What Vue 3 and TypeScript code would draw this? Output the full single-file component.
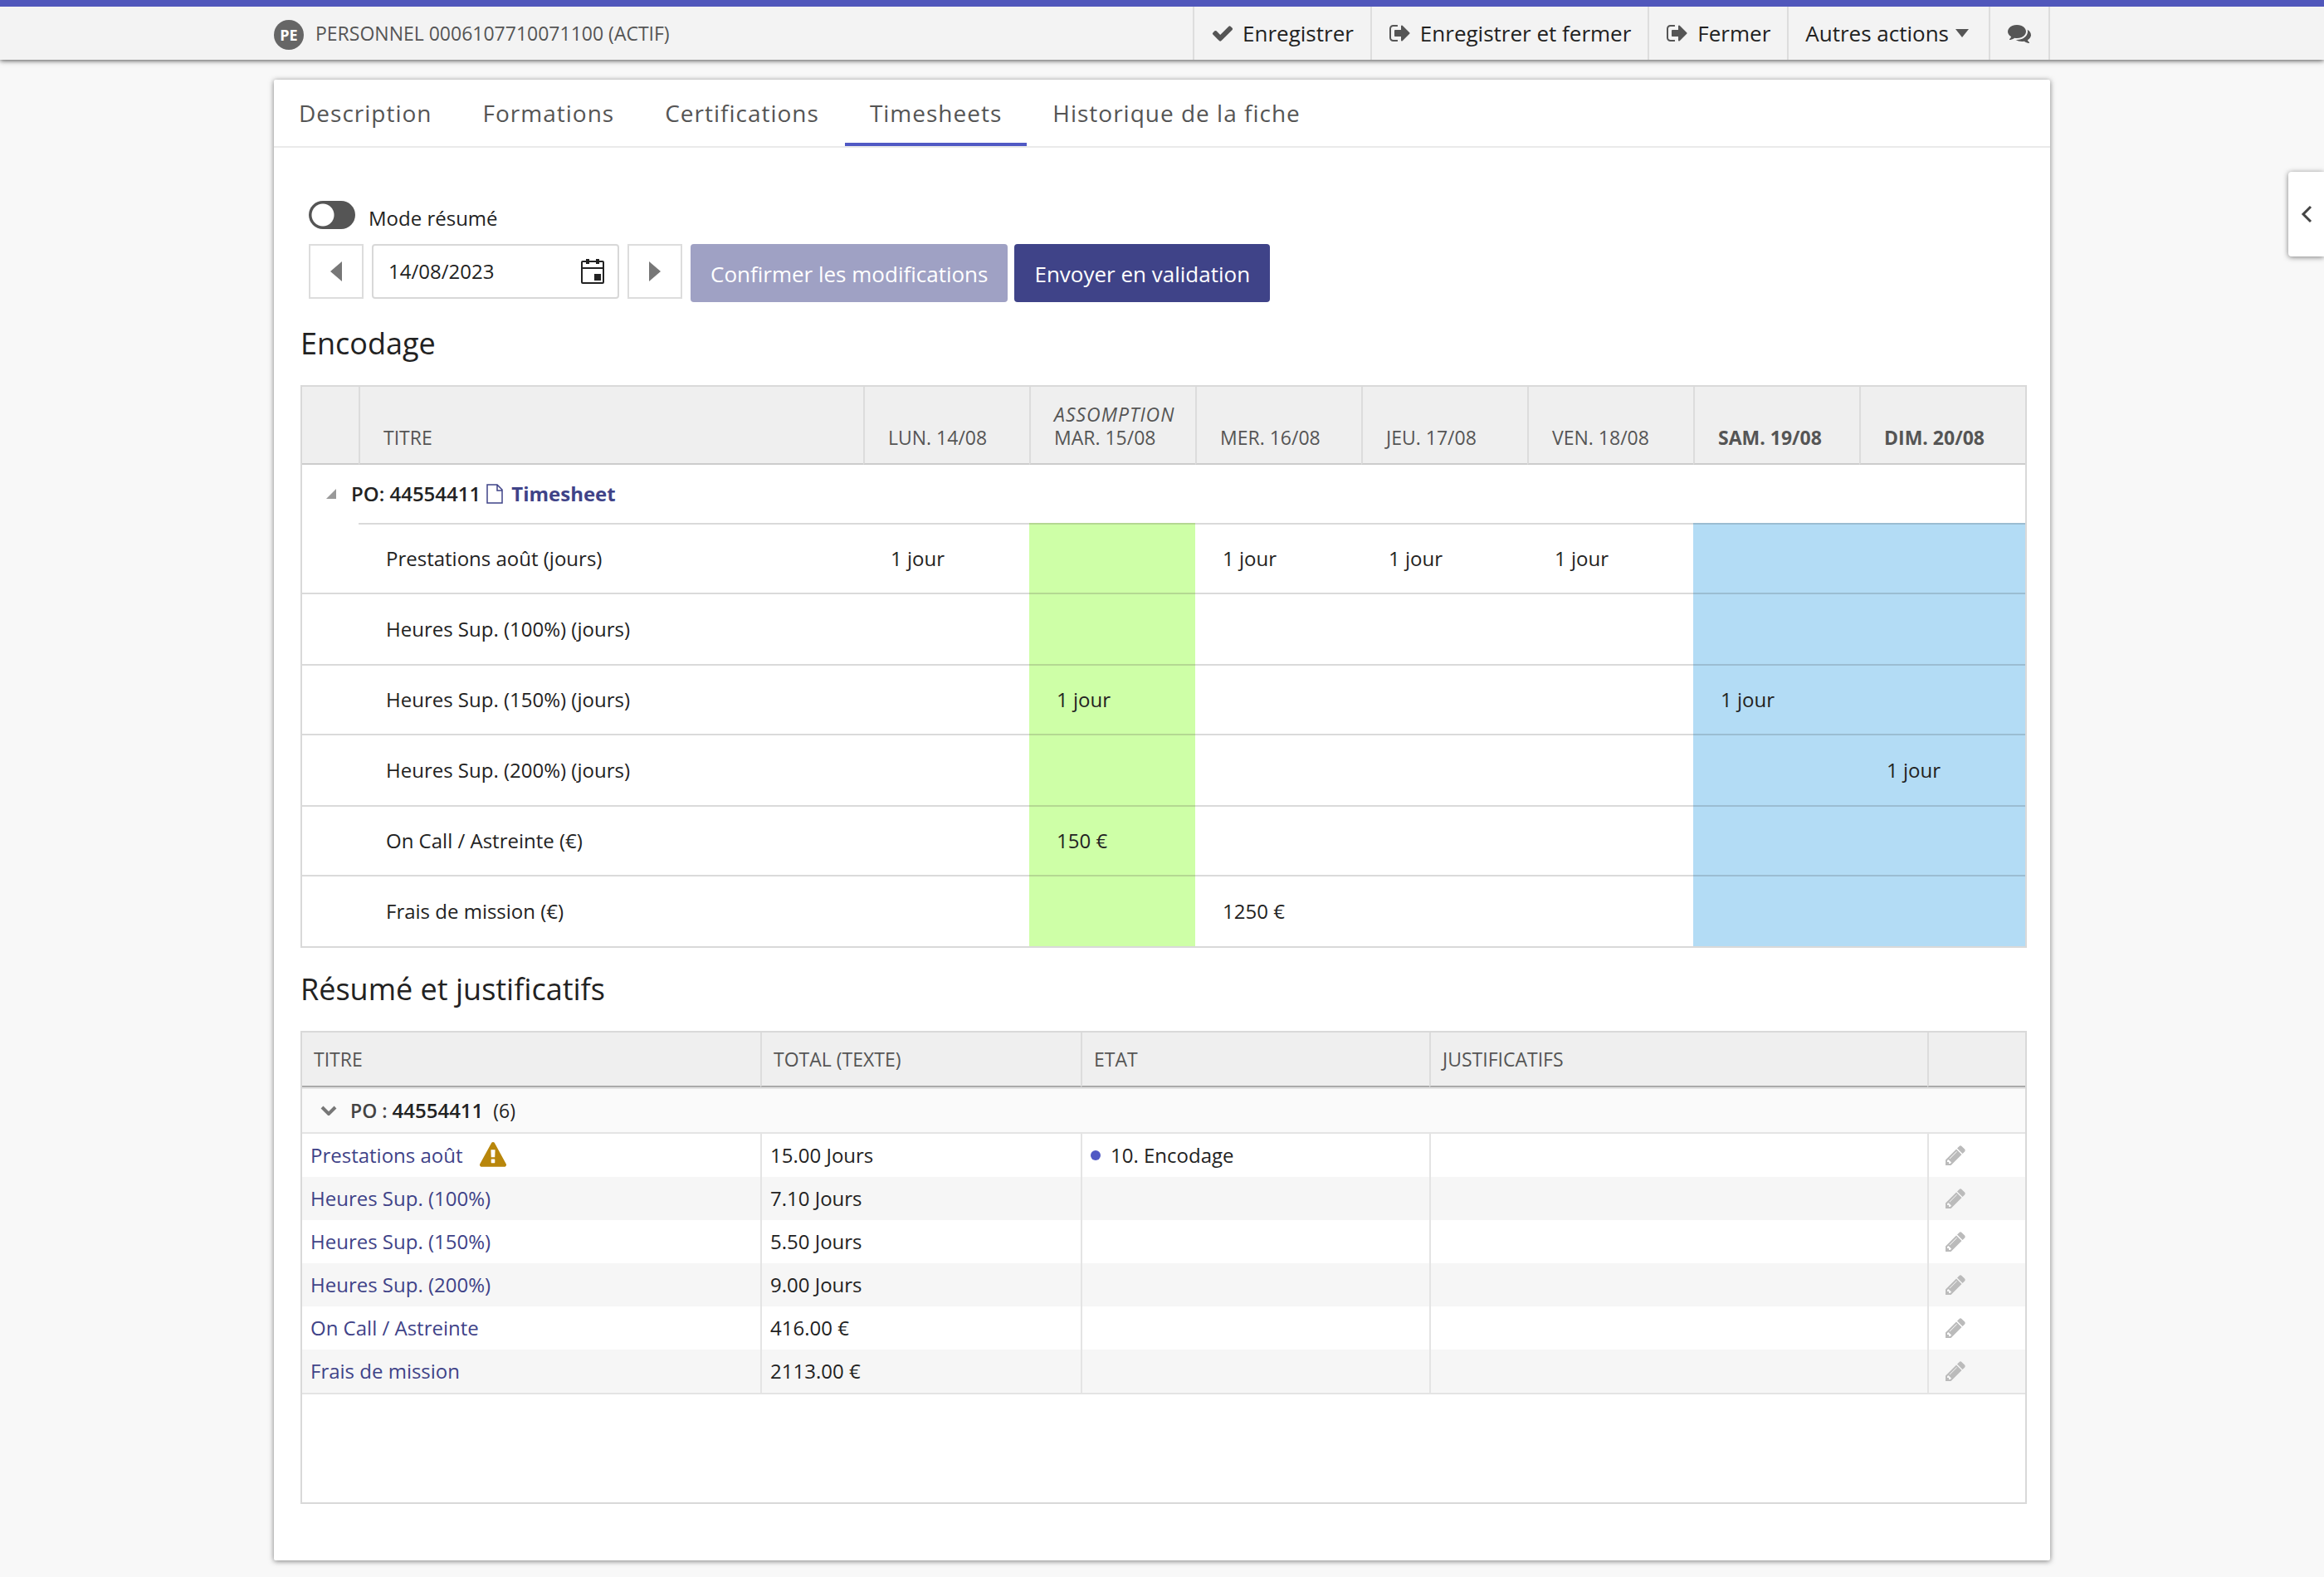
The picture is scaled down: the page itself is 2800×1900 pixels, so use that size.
<script setup lang="ts">
import { ref } from 'vue'

interface Action {
  label: string
  icon: string
}

interface Day {
  label: string
  note?: string
  kind?: 'holiday' | 'weekend'
}

interface Entry {
  title: string
  values: string[]
}

interface Summary {
  title: string
  total: string
  state?: string
  warning?: boolean
}

const icons = {
  check:
    'M1671 566q0 40-28 68l-724 724-136 136q-28 28-68 28t-68-28l-136-136-362-362q-28-28-28-68t28-68l136-136q28-28 68-28t68 28l294 295 656-657q28-28 68-28t68 28l136 136q28 28 28 68z',
  exit:
    'M704 1440q0 4 1 20t.5 26.5-3 23.5-10 19.5-20.5 6.5h-320q-119 0-203.500-84.500t-84.500-203.500v-704q0-119 84.500-203.500t203.500-84.500h320q13 0 22.500 9.500t9.500 22.500q0 4 1 20t.5 26.500-3 23.500-10 19.500-20.500 6.500h-320q-66 0-113 47t-47 113v704q0 66 47 113t113 47h312l11.500 1 11.500 3 8 5.500 7 9 2 13.500zm928-544q0 26-19 45l-544 544q-19 19-45 19t-45-19-19-45v-288h-448q-26 0-45-19t-19-45v-384q0-26 19-45t45-19h448v-288q0-26 19-45t45-19 45 19l544 544q19 19 19 45z',
  comments:
    'M1408 768q0 139-94 257t-256.500 186.500-353.500 68.500q-86 0-176-16-124 88-278 128-36 9-86 16h-3q-11 0-20.500-8t-11.500-21q-1-3-1-6.500t.5-6.500 2-6l2.500-5 3.500-5.500 4-5 4.500-5 4-4.500q5-6 23-25t26-29.500 22.500-29 25-38.500 20.500-44q-124-72-195-177t-71-224q0-139 94-257t256.500-186.500 353.500-68.500 353.500 68.500 256.500 186.500 94 257zm384 256q0 120-71 224.500t-195 176.500q10 24 20.500 44t25 38.500 22.500 29 26 29.500 23 25q1 1 4 4.500t4.500 5 4 5 3.500 5.500l2.500 5 2 6 .5 6.500-1 6.500q-3 14-13 22t-22 7q-50-7-86-16-154-40-278-128-90 16-176 16-271 0-472-132 58 4 88 4 161 0 309-45t264-129q125-92 192-212t67-254q0-77-23-152 129 71 204 187t75 264z',
  pencil:
    'M491 1536l91-91-235-235-91 91v107h128v128h107zm523-928q0-22-22-22-10 0-17 7l-542 542q-7 7-7 17 0 22 22 22 10 0 17-7l542-542q7-7 7-17zm-54-192l416 416-832 832h-416v-416zm683 96q0 53-37 90l-166 166-416-416 166-165q36-38 90-38 53 0 91 38l235 234q37 39 37 91z',
  warning:
    'M1024 1375v-190q0-14-9.500-23.500t-22.500-9.500h-192q-13 0-22.500 9.500t-9.500 23.500v190q0 14 9.500 23.500t22.500 9.500h192q13 0 22.500-9.500t9.500-23.500zm-2-374l18-459q0-12-10-19-13-11-24-11h-220q-11 0-24 11-10 7-10 21l17 457q0 10 10 16.500t24 6.500h185q14 0 23.500-6.500t10.500-16.500zm-14-934l768 1408q35 63-2 126-17 29-46.500 46t-63.500 17h-1536q-34 0-63.500-17t-46.500-46q-37-63-2-126l768-1408q17-31 47-49t65-18 65 18 47 49z',
}

const actions: Action[] = [
  { label: 'Enregistrer', icon: icons.check },
  { label: 'Enregistrer et fermer', icon: icons.exit },
  { label: 'Fermer', icon: icons.exit },
]

const tabs = ['Description', 'Formations', 'Certifications', 'Timesheets', 'Historique de la fiche']
const activeTab = ref('Timesheets')
const summaryMode = ref(false)
const date = ref('14/08/2023')

const days: Day[] = [
  { label: 'LUN. 14/08' },
  { label: 'MAR. 15/08', note: 'ASSOMPTION', kind: 'holiday' },
  { label: 'MER. 16/08' },
  { label: 'JEU. 17/08' },
  { label: 'VEN. 18/08' },
  { label: 'SAM. 19/08', kind: 'weekend' },
  { label: 'DIM. 20/08', kind: 'weekend' },
]

const entries: Entry[] = [
  { title: 'Prestations août (jours)', values: ['1 jour', '', '1 jour', '1 jour', '1 jour', '', ''] },
  { title: 'Heures Sup. (100%) (jours)', values: ['', '', '', '', '', '', ''] },
  { title: 'Heures Sup. (150%) (jours)', values: ['', '1 jour', '', '', '', '1 jour', ''] },
  { title: 'Heures Sup. (200%) (jours)', values: ['', '', '', '', '', '', '1 jour'] },
  { title: 'On Call / Astreinte (€)', values: ['', '150 €', '', '', '', '', ''] },
  { title: 'Frais de mission (€)', values: ['', '', '1250 €', '', '', '', ''] },
]

const summaries: Summary[] = [
  { title: 'Prestations août', total: '15.00 Jours', state: '10. Encodage', warning: true },
  { title: 'Heures Sup. (100%)', total: '7.10 Jours' },
  { title: 'Heures Sup. (150%)', total: '5.50 Jours' },
  { title: 'Heures Sup. (200%)', total: '9.00 Jours' },
  { title: 'On Call / Astreinte', total: '416.00 €' },
  { title: 'Frais de mission', total: '2113.00 €' },
]
</script>

<template>
  <div class="page">
    <header class="topbar">
      <span class="badge">PE</span>
      <h1 class="record">PERSONNEL 0006107710071100 (ACTIF)</h1>
      <div class="actions">
        <button v-for="action in actions" :key="action.label" type="button" class="action">
          <svg class="icon" viewBox="0 0 1792 1792" aria-hidden="true"><path :d="action.icon" /></svg>
          {{ action.label }}
        </button>
        <button type="button" class="action action-menu">
          Autres actions
          <svg class="caret" viewBox="0 0 16 10" aria-hidden="true"><path d="M0 0h16L8 10z" /></svg>
        </button>
        <button type="button" class="action action-comments" aria-label="Commentaires">
          <svg class="icon" viewBox="0 0 1792 1792" aria-hidden="true"><path :d="icons.comments" /></svg>
        </button>
      </div>
    </header>

    <main class="card">
      <nav class="tabs">
        <a
          v-for="tab in tabs"
          :key="tab"
          href="#"
          class="tab"
          :class="{ active: tab === activeTab }"
          @click.prevent="activeTab = tab"
        >{{ tab }}</a>
      </nav>

      <div class="content">
        <label class="mode">
          <input v-model="summaryMode" type="checkbox" class="toggle" />
          <span>Mode résumé</span>
        </label>

        <div class="controls">
          <button type="button" class="step" aria-label="Semaine précédente">
            <svg class="arrow" viewBox="0 0 14 24" aria-hidden="true"><path d="M14 0v24L0 12z" /></svg>
          </button>
          <div class="date">
            <input v-model="date" type="text" class="date-input" aria-label="Date" />
            <button type="button" class="date-button" aria-label="Ouvrir le calendrier">
              <svg class="calendar" viewBox="0 0 28 30" aria-hidden="true">
                <rect x="1" y="3" width="26" height="26" rx="1" fill="none" stroke="#222" stroke-width="2" />
                <path d="M1 10h26v2H1zM6 0h4v6H6zM18 0h4v6h-4zM16 18h8v8h-8z" fill="#222" />
              </svg>
            </button>
          </div>
          <button type="button" class="step" aria-label="Semaine suivante">
            <svg class="arrow" viewBox="0 0 14 24" aria-hidden="true"><path d="M0 0v24l14-12z" /></svg>
          </button>
          <div class="submit">
            <button type="button" class="primary" disabled>Confirmer les modifications</button>
            <button type="button" class="primary">Envoyer en validation</button>
          </div>
        </div>

        <h2 class="heading">Encodage</h2>
        <div class="frame">
          <table class="grid week">
            <colgroup>
              <col class="col-toggle" />
              <col />
              <col v-for="day in days" :key="day.label" class="col-day" />
            </colgroup>
            <thead>
              <tr>
                <th aria-label="Groupe"></th>
                <th>TITRE</th>
                <th v-for="day in days" :key="day.label" :class="{ strong: day.kind === 'weekend' }">
                  <em v-if="day.note">{{ day.note }}</em>
                  {{ day.label }}
                </th>
              </tr>
            </thead>
            <tbody>
              <tr class="group">
                <td :colspan="days.length + 2">
                  <div class="group-line">
                    <svg class="corner" viewBox="0 0 12 12" aria-hidden="true"><path d="M12 0v12H0z" /></svg>
                    <span>PO: 44554411</span>
                    <a href="#" class="file-link" @click.prevent>
                      <svg class="file" viewBox="0 0 22 24" aria-hidden="true">
                        <path d="M2 1h12l6 6v16H2zM14 1v7h6" fill="none" stroke="#3f4388" stroke-width="1.500" />
                      </svg>
                      Timesheet
                    </a>
                  </div>
                </td>
              </tr>
              <tr v-for="entry in entries" :key="entry.title" class="entry">
                <td></td>
                <td>{{ entry.title }}</td>
                <td v-for="(value, index) in entry.values" :key="index" :class="days[index].kind">{{ value }}</td>
              </tr>
            </tbody>
          </table>
        </div>

        <h2 class="heading">Résumé et justificatifs</h2>
        <div class="frame roomy">
          <table class="grid summary">
            <colgroup>
              <col class="col-title" />
              <col class="col-total" />
              <col class="col-state" />
              <col />
              <col class="col-edit" />
            </colgroup>
            <thead>
              <tr>
                <th>TITRE</th>
                <th>TOTAL (TEXTE)</th>
                <th>ETAT</th>
                <th>JUSTIFICATIFS</th>
                <th aria-label="Modifier"></th>
              </tr>
            </thead>
            <tbody>
              <tr class="group">
                <td colspan="5">
                  <div class="group-line">
                    <svg class="chevron" viewBox="0 0 20 12" aria-hidden="true">
                      <path d="M2 2l8 8 8-8" fill="none" stroke="#777" stroke-width="4" />
                    </svg>
                    <span class="group-name">PO :</span>
                    <span class="group-value">44554411</span>
                    <span class="group-count">(6)</span>
                  </div>
                </td>
              </tr>
              <tr v-for="row in summaries" :key="row.title" class="entry">
                <td>
                  <div class="cell">
                    <a href="#" class="row-link" @click.prevent>{{ row.title }}</a>
                    <svg v-if="row.warning" class="warning" viewBox="0 0 1792 1792" role="img" aria-label="Attention">
                      <path :d="icons.warning" />
                    </svg>
                  </div>
                </td>
                <td>{{ row.total }}</td>
                <td>
                  <div v-if="row.state" class="cell state"><span class="dot"></span>{{ row.state }}</div>
                </td>
                <td></td>
                <td>
                  <button type="button" class="edit" :aria-label="'Modifier ' + row.title">
                    <svg class="icon" viewBox="0 0 1792 1792" aria-hidden="true"><path :d="icons.pencil" /></svg>
                  </button>
                </td>
              </tr>
            </tbody>
          </table>
        </div>
      </div>
    </main>

    <button type="button" class="drawer" aria-label="Ouvrir le panneau">
      <svg class="drawer-icon" viewBox="0 0 14 22" aria-hidden="true">
        <path d="M12 2l-9 9 9 9" fill="none" stroke="#444" stroke-width="3" />
      </svg>
    </button>
  </div>
</template>

<style>
body {
  margin: 0;
  background: #f8f8f8;
}
</style>

<style scoped>
.page {
  min-height: 100vh;
  box-sizing: border-box;
  padding-bottom: 20px;
  overflow-x: hidden;
  font-family: 'Open Sans', 'Noto Sans', sans-serif;
  font-size: 24px;
  line-height: 32px;
  color: #222;
}

button,
input {
  margin: 0;
  padding: 0;
  border: 0;
  background: none;
  font: inherit;
  color: inherit;
}

button {
  cursor: pointer;
}

a {
  text-decoration: none;
}

svg {
  display: block;
  flex: none;
}

.icon {
  width: 28px;
  height: 28px;
  fill: #555;
}

.topbar {
  display: flex;
  align-items: center;
  height: 64px;
  padding: 0 330px;
  border-top: 8px solid #5057bb;
  background: #f3f3f3;
  box-shadow: 0 1px 6px rgba(0, 0, 0, 0.7);
}

.badge {
  display: flex;
  align-items: center;
  justify-content: center;
  width: 36px;
  height: 36px;
  margin-top: 4px;
  margin-right: 14px;
  border-radius: 50%;
  background: #666;
  color: #fff;
  font-size: 18px;
  font-weight: 700;
}

.record {
  margin: 0;
  font-size: 23px;
  font-weight: 400;
  color: #555;
}

.actions {
  display: flex;
  align-self: stretch;
  margin-left: auto;
  border-right: 2px solid #ddd;
}

.action {
  display: flex;
  align-items: center;
  gap: 10px;
  padding: 0 20px;
  border-left: 2px solid #ddd;
  font-size: 26px;
}

.action-menu {
  gap: 8px;
  padding-right: 24px;
}

.action-comments {
  padding: 0 21px;
}

.caret {
  width: 16px;
  height: 10px;
  fill: #555;
}

.card {
  margin: 24px 330px 0;
  border-radius: 2px;
  background: #fff;
  box-shadow: 0 1px 6px rgba(0, 0, 0, 0.5);
}

.tabs {
  display: flex;
  gap: 1px;
  height: 80px;
  border-bottom: 2px solid #eaeaea;
}

.tab {
  box-sizing: border-box;
  height: 80px;
  padding: 18px 30px 0;
  border-bottom: 4px solid transparent;
  font-size: 28px;
  line-height: 44px;
  letter-spacing: 1px;
  color: #555;
}

.tab.active {
  border-bottom-color: #5059c4;
}

.content {
  padding: 64px 28px 68px 32px;
}

.mode {
  display: flex;
  gap: 16px;
  width: max-content;
  margin-left: 10px;
}

.mode span {
  padding-top: 5px;
}

.toggle {
  appearance: none;
  width: 56px;
  height: 34px;
  border-radius: 17px;
  background: radial-gradient(circle at 17px 17px, #fff 13px, #555 14px);
}

.toggle:checked {
  background: radial-gradient(circle at 39px 17px, #fff 13px, #555 14px);
}

.controls {
  display: flex;
  align-items: flex-start;
  gap: 10px;
  margin: 15px 0 0 10px;
}

.step {
  display: flex;
  align-items: center;
  justify-content: center;
  box-sizing: border-box;
  width: 66px;
  height: 66px;
  border: 2px solid #ddd;
}

.arrow {
  width: 14px;
  height: 24px;
  fill: #777;
}

.date {
  display: flex;
  align-items: center;
  box-sizing: border-box;
  width: 298px;
  height: 66px;
  padding: 0 16px 0 18px;
  border: 2px solid #d8d8d8;
  border-radius: 4px;
}

.date-input {
  flex: 1;
  min-width: 0;
}

.calendar {
  width: 28px;
  height: 30px;
}

.submit {
  display: flex;
  gap: 8px;
}

.primary {
  height: 70px;
  padding: 2px 24px 0;
  border-radius: 4px;
  background: #3f4388;
  font-size: 26px;
  color: #fff;
}

.primary:disabled {
  background: #9fa1c4;
}

.heading {
  margin: 24px 0;
  font-size: 36px;
  font-weight: 400;
  line-height: 52px;
}

.frame {
  border: 2px solid #d9d9d9;
}

.roomy {
  padding-bottom: 130px;
}

.grid {
  width: 100%;
  table-layout: fixed;
  border-collapse: separate;
  border-spacing: 0;
}

.grid th,
.grid td {
  box-sizing: border-box;
  padding: 0;
  text-align: left;
}

.grid th {
  background: #efefef;
  font-size: 23px;
  font-weight: 500;
  line-height: 28px;
  color: #555;
}

.grid th + th {
  border-left: 2px solid #dcdcdc;
}

.col-toggle {
  width: 68px;
}

.col-day {
  width: 200px;
}

.week th {
  height: 94px;
  padding: 0 0 17px 28px;
  border-bottom: 2px solid #ccc;
  vertical-align: bottom;
}

.week em {
  display: block;
  letter-spacing: 1px;
}

.week th.strong {
  font-weight: 700;
}

.week .group td {
  height: 70px;
  padding-left: 29px;
}

.group-line {
  display: flex;
  align-items: center;
  font-weight: 600;
}

.corner {
  width: 12px;
  height: 12px;
  margin-right: 18px;
  fill: #999;
}

.file-link {
  display: flex;
  align-items: center;
  gap: 9px;
  margin-left: 6px;
  font-weight: 700;
  color: #3f4388;
}

.file {
  width: 22px;
  height: 24px;
}

.week .entry td {
  height: 86px;
  padding-left: 33px;
  border-top: 2px solid #dadada;
}

.week .entry:nth-child(even) td {
  height: 84px;
}

.week .entry:nth-child(2) td:first-child {
  border-top-color: transparent;
}

.week .entry td.holiday {
  border-top-color: #b4d892;
  background: #ceffa7;
}

.week .entry td.weekend {
  border-top-color: #9bbdd2;
  background: #b3dcf5;
}

.col-title {
  width: 552px;
}

.col-total {
  width: 386px;
}

.col-state {
  width: 420px;
}

.col-edit {
  width: 118px;
}

.summary th {
  height: 66px;
  padding-left: 14px;
  border-bottom: 2px solid #aaa;
}

.summary .group td {
  height: 56px;
  padding-left: 22px;
  border-top: 2px solid #e4e4e4;
  border-bottom: 2px solid #e4e4e4;
  background: #fafafa;
}

.chevron {
  width: 20px;
  height: 12px;
  margin-right: 16px;
}

.group-name {
  margin-right: 6px;
  font-size: 23px;
  color: #444;
}

.group-count {
  margin-left: 12px;
  font-size: 23px;
  font-weight: 400;
}

.summary .entry td {
  height: 52px;
  padding-left: 10px;
}

.summary .entry td + td {
  border-left: 2px solid #e4e4e4;
}

.summary .entry:nth-child(odd) td {
  background: #f6f6f6;
}

.summary .entry:last-child td {
  height: 54px;
  border-bottom: 2px solid #e4e4e4;
}

.cell {
  display: flex;
  align-items: center;
}

.row-link {
  color: #3f4388;
}

.warning {
  width: 32px;
  height: 32px;
  margin-left: 20px;
  fill: #b8860b;
}

.state {
  gap: 12px;
}

.dot {
  width: 12px;
  height: 12px;
  border-radius: 50%;
  background: #5059c4;
}

.edit {
  display: block;
  margin-left: 8px;
}

.edit .icon {
  fill: #bbb;
}

.drawer {
  position: absolute;
  top: 207px;
  right: 0;
  display: flex;
  align-items: center;
  justify-content: center;
  width: 43px;
  height: 102px;
  border-radius: 4px 0 0 4px;
  background: #fff;
  box-shadow: 0 1px 6px rgba(0, 0, 0, 0.5);
}

.drawer-icon {
  width: 14px;
  height: 22px;
}
</style>
